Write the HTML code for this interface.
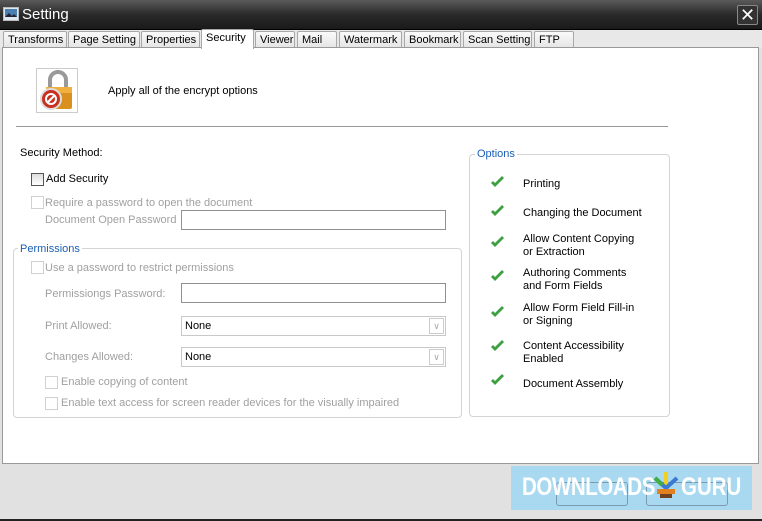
<!DOCTYPE html>
<html><head><style>
*{margin:0;padding:0;box-sizing:border-box}
body{width:762px;height:521px;overflow:hidden;background:#e1e1e1;font-family:"Liberation Sans",sans-serif;font-size:11px;color:#000;position:relative}
.a{position:absolute;white-space:nowrap}
.title{left:0;top:0;width:762px;height:30px;background:linear-gradient(#5a5a5a,#2a2a2a 50%,#1a1a1a);border-bottom:1px solid #000}
.tabs{left:0;top:30px;width:762px;height:18px;background:#e8e8e8}
.tab{position:absolute;top:31px;height:17px;border:1px solid #a8a8a8;border-bottom:none;background:linear-gradient(#fafafa,#e4e4e4);padding:2px 0 0 4px;font-size:11px;border-radius:2px 2px 0 0;white-space:nowrap;overflow:hidden}
.panel{left:2px;top:47px;width:757px;height:417px;background:#fff;border:1px solid #999}
.g{color:#a0a0a0}
.cb{position:absolute;width:13px;height:13px;border:1px solid #d0d0d0;background:#fff}
.inp{position:absolute;border:1px solid #909090;background:#fff;height:20px}
.sel{position:absolute;border:1px solid #c8c8c8;background:#fff;height:20px;padding:3px 0 0 3px}
.sel i{position:absolute;right:1px;top:1px;width:15px;height:16px;border:1px solid #ccc;font-style:normal;color:#aaa;font-size:9px;text-align:center;line-height:15px}
.grp{position:absolute;border:1px solid #d4d4d4;border-radius:4px}
.leg{position:absolute;background:#fff;color:#1a5fb4;padding:0 2px}
.ck{position:absolute;left:490px}
.ot{position:absolute;left:523px;line-height:13px}
</style></head><body>
<div class="a title"></div>
<svg class="a" style="left:3px;top:7px" width="16" height="14"><rect x="0.5" y="0.5" width="15" height="13" fill="#dde8f0" stroke="#bbb"/><rect x="2" y="2" width="12" height="8" fill="#4a7fb0"/><path d="M2 10 L6 6 L9 9 L11 7 L14 10Z" fill="#223"/></svg>
<div class="a" style="left:22px;top:6px;color:#fff;font-size:15px">Setting</div>
<div class="a" style="left:737px;top:5px;width:21px;height:20px;border:1px solid #888;border-radius:2px;background:#333;color:#fff;font-size:18px;text-align:center;line-height:18px">✕</div>
<div class="a tabs"></div>
<div class="tab" style="left:3px;width:64px">Transforms</div>
<div class="tab" style="left:68px;width:72px">Page Setting</div>
<div class="tab" style="left:141px;width:59px">Properties</div>
<div class="tab" style="left:201px;width:53px;top:29px;height:20px;background:#fff;z-index:2">Security</div>
<div class="tab" style="left:255px;width:40px">Viewer</div>
<div class="tab" style="left:297px;width:40px">Mail</div>
<div class="tab" style="left:339px;width:63px">Watermark</div>
<div class="tab" style="left:404px;width:57px">Bookmark</div>
<div class="tab" style="left:463px;width:69px">Scan Setting</div>
<div class="tab" style="left:534px;width:40px">FTP</div>
<div class="a panel"></div>
<div class="a" style="left:36px;top:68px;width:42px;height:45px;border:1px solid #ccc;background:#fff"></div>
<svg class="a" style="left:38px;top:68px" width="40" height="44"><path d="M12 20 V12 a8 8 0 0 1 16 0 V20" fill="none" stroke="#999" stroke-width="4"/><rect x="8" y="19" width="26" height="22" rx="2" fill="#d9901e"/><rect x="8" y="19" width="26" height="6" fill="#f0b040"/><circle cx="13" cy="31" r="10" fill="#c83020" stroke="#ddd" stroke-width="2"/><circle cx="13" cy="31" r="5" fill="none" stroke="#fff" stroke-width="2"/><path d="M9 35 L17 27" stroke="#fff" stroke-width="2"/></svg>
<div class="a" style="left:108px;top:85px">Apply all of the encrypt options</div>
<div class="a" style="left:16px;top:126px;width:652px;height:1px;background:#999"></div>
<div class="a" style="left:20px;top:147px">Security Method:</div>
<div class="cb" style="left:31px;top:173px;border-color:#555;background:linear-gradient(#ddd,#fff)"></div>
<div class="a" style="left:46px;top:173px">Add Security</div>
<div class="cb" style="left:31px;top:196px"></div>
<div class="a g" style="left:45px;top:197px">Require a password to open the document</div>
<div class="a g" style="left:45px;top:214px">Document Open Password</div>
<div class="inp" style="left:181px;top:210px;width:265px"></div>
<div class="grp" style="left:13px;top:248px;width:449px;height:170px"></div>
<div class="leg" style="left:18px;top:243px">Permissions</div>
<div class="cb" style="left:31px;top:261px"></div>
<div class="a g" style="left:45px;top:262px">Use a password to restrict permissions</div>
<div class="a g" style="left:45px;top:288px">Permissiongs Password:</div>
<div class="inp" style="left:181px;top:283px;width:265px"></div>
<div class="a g" style="left:45px;top:320px">Print Allowed:</div>
<div class="sel" style="left:181px;top:316px;width:265px">None<i>∨</i></div>
<div class="a g" style="left:45px;top:351px">Changes Allowed:</div>
<div class="sel" style="left:181px;top:347px;width:265px">None<i>∨</i></div>
<div class="cb" style="left:45px;top:376px"></div>
<div class="a g" style="left:61px;top:376px">Enable copying of content</div>
<div class="cb" style="left:45px;top:397px"></div>
<div class="a g" style="left:61px;top:397px">Enable text access for screen reader devices for the visually impaired</div>
<div class="grp" style="left:469px;top:154px;width:201px;height:263px"></div>
<div class="leg" style="left:475px;top:148px">Options</div>
<svg width="0" height="0" style="position:absolute"><defs><path id="c" d="M1 7 L5 11 L14 2 L12 0 L5 7 L3 5Z" fill="#3ca040"/></defs></svg>
<svg class="ck" style="top:176px" width="15" height="12"><use href="#c"/></svg>
<div class="ot" style="top:178px">Printing</div>
<svg class="ck" style="top:205px" width="15" height="12"><use href="#c"/></svg>
<div class="ot" style="top:207px">Changing the Document</div>
<svg class="ck" style="top:236px" width="15" height="12"><use href="#c"/></svg>
<div class="ot" style="top:233px">Allow Content Copying<br>or Extraction</div>
<svg class="ck" style="top:270px" width="15" height="12"><use href="#c"/></svg>
<div class="ot" style="top:267px">Authoring Comments<br>and Form Fields</div>
<svg class="ck" style="top:306px" width="15" height="12"><use href="#c"/></svg>
<div class="ot" style="top:302px">Allow Form Field Fill-in<br>or Signing</div>
<svg class="ck" style="top:340px" width="15" height="12"><use href="#c"/></svg>
<div class="ot" style="top:340px">Content Accessibility<br>Enabled</div>
<svg class="ck" style="top:374px" width="15" height="12"><use href="#c"/></svg>
<div class="ot" style="top:378px">Document Assembly</div>
<div class="a" style="left:0;top:519px;width:762px;height:2px;background:#222"></div>
<div class="a" style="left:511px;top:466px;width:241px;height:44px;background:#a9d9f0"></div>
<div class="a" style="left:556px;top:482px;width:72px;height:24px;border:1px solid #7a9ab0;border-radius:3px"></div>
<div class="a" style="left:646px;top:482px;width:82px;height:24px;border:1px solid #7a9ab0;border-radius:3px"></div>
<div class="a" style="left:522px;top:473px;color:#fff;font-size:25px;font-weight:bold;letter-spacing:-0.5px;transform:scaleX(0.82);transform-origin:left">DOWNLOADS</div>
<svg class="a" style="left:653px;top:472px" width="26" height="30"><rect x="11" y="0" width="4" height="14" fill="#f0d020"/><path d="M2 6 L13 16 L24 6" stroke="#3a7ad0" stroke-width="4" fill="none"/><path d="M2 6 L9 13" stroke="#40b040" stroke-width="4"/><rect x="4" y="17" width="18" height="5" fill="#e08020"/><rect x="7" y="22" width="12" height="4" fill="#704020"/></svg>
<div class="a" style="left:681px;top:473px;color:#fff;font-size:25px;font-weight:bold;transform:scaleX(0.82);transform-origin:left">GURU</div>
</body></html>
